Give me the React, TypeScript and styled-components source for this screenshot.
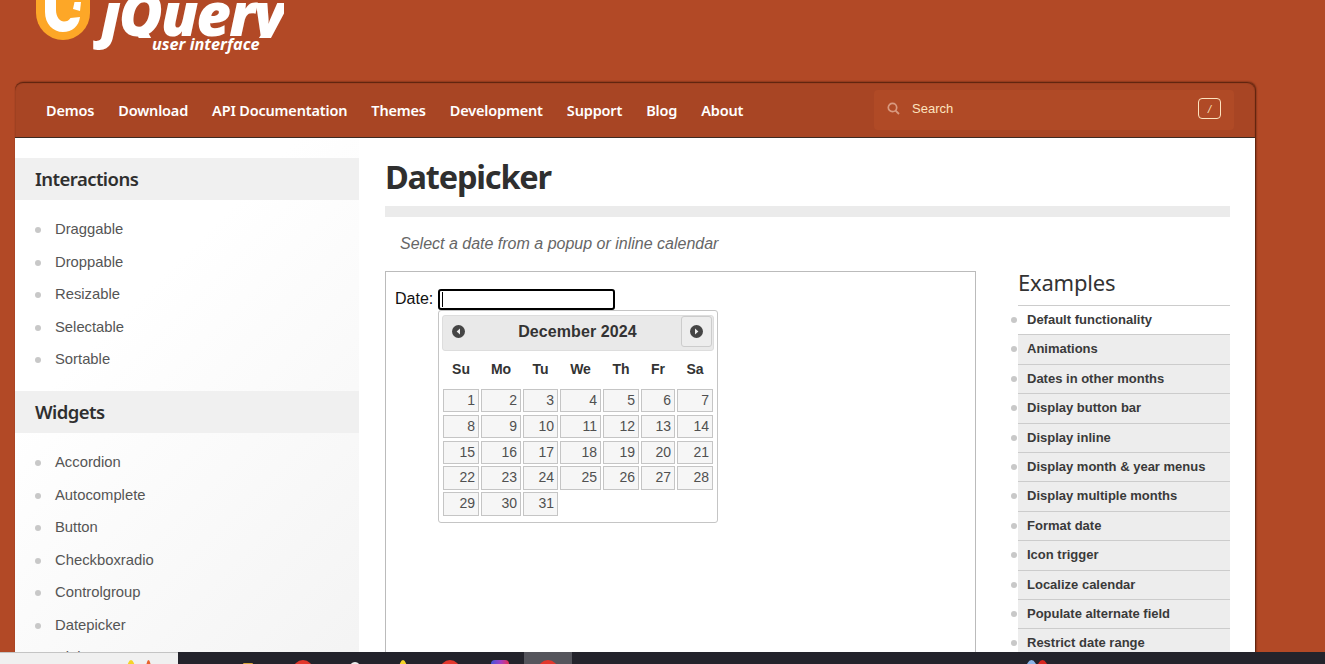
import * as React from 'react';
import styled, { createGlobalStyle } from 'styled-components';

const interactions = ['Draggable', 'Droppable', 'Resizable', 'Selectable', 'Sortable'];
const widgets = ['Accordion', 'Autocomplete', 'Button', 'Checkboxradio', 'Controlgroup', 'Datepicker', 'Dialog'];
const navLinks = ['Demos', 'Download', 'API Documentation', 'Themes', 'Development', 'Support', 'Blog', 'About'];
const examples = [
  'Default functionality',
  'Animations',
  'Dates in other months',
  'Display button bar',
  'Display inline',
  'Display month & year menus',
  'Display multiple months',
  'Format date',
  'Icon trigger',
  'Localize calendar',
  'Populate alternate field',
  'Restrict date range',
];
const weekDays = ['Su', 'Mo', 'Tu', 'We', 'Th', 'Fr', 'Sa'];
const days = Array.from({ length: 31 }, (_, i) => i + 1);

const GlobalStyle = createGlobalStyle`
  html, body {
    margin: 0;
    padding: 0;
    background: #b24926;
  }
`;

const Screen = styled.div`
  width: 1325px;
  height: 664px;
  overflow: hidden;
  display: flex;
  flex-direction: column;
  background: #b24926;
`;

const Page = styled.div`
  height: 652px;
  flex: none;
  overflow: hidden;
`;

const LogoRow = styled.header`
  height: 82px;
  padding-left: 36px;
  display: flex;
  overflow: hidden;
`;

const LogoMark = styled.svg`
  width: 54px;
  height: 40px;
  flex: none;
`;

const LogoType = styled.div`
  margin-left: 11px;
  width: 200px;
  color: #fff;
  font-family: 'Open Sans', sans-serif;
  font-style: italic;
  font-weight: 800;
`;

const LogoWord = styled.div`
  display: flex;
  height: 56px;
  font-size: 60px;
  line-height: 62px;
  margin-top: -18px;
  letter-spacing: -1.9px;
`;

// the tail of the y stays above the "user interface" line, only the j hangs below it
const LogoTail = styled.span`
  display: block;
  height: 56px;
  overflow: hidden;
`;

const LogoSub = styled.div`
  font-size: 16.3px;
  line-height: 12px;
  margin-left: 51px;
  font-weight: 700;
  white-space: nowrap;
`;

const Wrap = styled.div`
  width: 1240px;
  margin-left: 15px;
  box-shadow: 1px 0 2px rgba(60, 20, 5, 0.9);
  border-radius: 8px 8px 0 0;
`;

const NavBar = styled.nav`
  height: 55px;
  background: #a84524;
  border-radius: 8px 8px 0 0;
  border-bottom: 1px solid #3c2a22;
  box-shadow: inset 0 1px 1px rgba(70, 25, 8, 0.8);
  display: flex;
  align-items: center;
  padding-left: 31px;
`;

const NavLink = styled.a`
  color: #fff;
  font-family: 'Noto Sans', sans-serif;
  font-size: 14.5px;
  font-weight: 600;
  margin-right: 24px;
  letter-spacing: -0.17px;
  white-space: nowrap;
`;

const SearchBox = styled.div`
  width: 360px;
  height: 40px;
  margin-left: auto;
  margin-right: 21px;
  box-sizing: border-box;
  padding: 0 13px 2px;
  background: #b04a26;
  border-radius: 4px;
  display: flex;
  align-items: center;
  color: #fde3bf;
  font-family: 'Liberation Sans', sans-serif;
  font-size: 13px;
`;

const SearchIcon = styled.svg`
  width: 13px;
  height: 13px;
  margin-right: 12px;
  flex: none;
`;

const SlashKey = styled.span`
  margin-left: auto;
  width: 23px;
  height: 21px;
  border: 1px solid #fde3bf;
  border-radius: 4px;
  display: flex;
  align-items: center;
  justify-content: center;
  font-size: 11px;
  font-style: italic;
  box-sizing: border-box;
`;

const Body = styled.div`
  background: #fff;
  height: 600px;
  display: flex;
  overflow: hidden;
`;

const Sidebar = styled.aside`
  width: 344px;
  flex: none;
  padding-top: 20px;
  background: linear-gradient(135deg, #ffffff 30%, #f2f2f2 100%);
`;

const SideTitle = styled.h3`
  margin: 0;
  height: 42px;
  line-height: 42px;
  padding-left: 20px;
  background: #f0f0f0;
  color: #2f2f2f;
  font-family: 'Noto Sans', sans-serif;
  font-size: 18.5px;
  font-weight: 600;
  letter-spacing: -0.55px;
`;

const SideList = styled.ul`
  list-style: none;
  margin: 0;
  padding: 13px 0 15.5px;
`;

const SideItem = styled.li`
  height: 32.5px;
  line-height: 32.5px;
  padding-left: 40px;
  color: #555;
  font-family: 'Liberation Sans', sans-serif;
  font-size: 14.8px;
  position: relative;

  &::before {
    content: '';
    position: absolute;
    left: 20px;
    top: 14px;
    width: 6px;
    height: 6px;
    border-radius: 50%;
    background: #c8c8c8;
  }
`;

const Main = styled.main`
  width: 845px;
  margin-left: 26px;
  flex: none;
`;

const PageTitle = styled.h1`
  margin: 0;
  padding-top: 17px;
  height: 51px;
  box-sizing: content-box;
  line-height: 44px;
  color: #2f2f2f;
  font-family: 'Noto Sans', sans-serif;
  font-size: 32.5px;
  font-weight: 700;
  letter-spacing: -1.2px;
  border-bottom: 11px solid #ebebeb;
`;

const Subtitle = styled.p`
  margin: 0;
  height: 54px;
  line-height: 53px;
  padding-left: 15px;
  color: #666;
  font-family: 'Liberation Sans', sans-serif;
  font-size: 16px;
  font-style: italic;
`;

const Columns = styled.div`
  display: flex;
  justify-content: space-between;
`;

const DemoFrame = styled.div`
  width: 591px;
  height: 500px;
  box-sizing: border-box;
  border: 1px solid #bbb;
  padding: 17px 9px;
  position: relative;
  display: flex;
  align-items: flex-start;
  color: #111;
  font-family: 'Liberation Sans', sans-serif;
  font-size: 16px;
  line-height: 20px;
`;

const DateLabel = styled.span`
  margin-right: 5px;
`;

const DateInput = styled.div`
  width: 177px;
  height: 21px;
  box-sizing: border-box;
  border: 2px solid #000;
  border-radius: 3px;
  padding: 1px;
  display: flex;

  &::before {
    content: '';
    width: 1px;
    height: 15px;
    margin-left: 1px;
    background: #000;
  }
`;

const Calendar = styled.div`
  position: absolute;
  left: 52px;
  top: 38px;
  width: 280px;
  height: 213px;
  box-sizing: border-box;
  border: 1px solid #c5c5c5;
  border-radius: 3px;
  background: #fff;
  padding: 4px 3px;
  font-family: 'Liberation Sans', sans-serif;
`;

const CalHeader = styled.div`
  height: 36px;
  box-sizing: border-box;
  background: #e9e9e9;
  border: 1px solid #ddd;
  border-radius: 3px;
  display: flex;
  align-items: flex-start;
  justify-content: space-between;
  padding: 0 1px 0 0;
  color: #333;
  font-size: 16px;
  font-weight: 700;
  letter-spacing: 0.1px;
`;

const CalTitle = styled.span`
  align-self: center;
  margin-bottom: 2px;
`;

const CalButton = styled.span<{ $hover?: boolean }>`
  width: 31px;
  height: 31px;
  box-sizing: border-box;
  display: flex;
  align-items: center;
  justify-content: center;
  border-radius: 3px;
  border: 1px solid ${(p) => (p.$hover ? '#ccc' : 'transparent')};
  background: ${(p) => (p.$hover ? '#ededed' : 'transparent')};
`;

const CalGrid = styled.div`
  display: grid;
  grid-template-columns: 36px 40px 35px 41px 36px 34px 36px;
  column-gap: 2px;
  margin-left: 1px;
`;

const WeekDay = styled.span`
  height: 38px;
  line-height: 36px;
  text-align: center;
  color: #333;
  font-size: 14px;
  font-weight: 700;
`;

const DayGrid = styled(CalGrid)`
  row-gap: 2.4px;
`;

const DayCell = styled.span`
  height: 23.4px;
  box-sizing: border-box;
  border: 1px solid #c5c5c5;
  background: #f6f6f6;
  color: #505050;
  font-size: 14px;
  line-height: 21px;
  text-align: right;
  padding-right: 3px;
`;

const ExamplesCol = styled.section`
  width: 212px;
  flex: none;
`;

const ExamplesTitle = styled.h2`
  margin: 0;
  height: 34px;
  line-height: 22px;
  color: #333;
  font-family: 'Noto Sans', sans-serif;
  font-size: 22px;
  font-weight: 400;
  letter-spacing: -0.2px;
  border-bottom: 1px solid #ccc;
`;

const ExampleList = styled.ul`
  list-style: none;
  margin: 0;
  padding: 0;
`;

const ExampleItem = styled.li<{ $first?: boolean }>`
  height: 29.42px;
  box-sizing: border-box;
  line-height: 28.2px;
  padding-left: 9px;
  background: ${(p) => (p.$first ? '#fff' : '#ededed')};
  border-bottom: 1px solid #ccc;
  color: #3a3a3a;
  font-family: 'Liberation Sans', sans-serif;
  font-size: 13px;
  font-weight: 700;
  white-space: nowrap;
  position: relative;

  &::before {
    content: '';
    position: absolute;
    left: -7px;
    top: 11px;
    width: 6px;
    height: 6px;
    border-radius: 50%;
    background: #c8c8c8;
  }
`;

const Taskbar = styled.footer`
  height: 12px;
  flex: none;
  display: flex;
  overflow: hidden;
  background: #23232b;
`;

const TrayLight = styled.div`
  width: 178px;
  flex: none;
  box-sizing: border-box;
  border-top: 1px solid #c4c4c4;
  background: #f0f0f0;
  display: flex;
  gap: 11px;
  padding-top: 7px;
  padding-left: 127px;
`;

const TrayApps = styled.div`
  display: flex;
  flex: 1;
  padding-left: 46px;
`;

const AppTile = styled.div<{ $active?: boolean; $gap?: number }>`
  width: 48px;
  height: 12px;
  margin-left: ${(p) => p.$gap ?? 0}px;
  display: flex;
  justify-content: center;
  padding-top: 8px;
  box-sizing: border-box;
  background: ${(p) => (p.$active ? '#55555c' : 'transparent')};
`;

const AppDot = styled.span<{ $color: string; $size?: number; $top?: number; $round?: string }>`
  width: ${(p) => p.$size ?? 20}px;
  height: 20px;
  margin-top: ${(p) => p.$top ?? 0}px;
  flex: none;
  border-radius: ${(p) => p.$round ?? '50%'};
  background: ${(p) => p.$color};
`;

const RightTray = styled.div`
  display: flex;
  padding-top: 8px;
  margin-right: 277px;
`;

const NavArrow = ({ dir }: { dir: 'left' | 'right' }) => (
  <svg width="13" height="13" viewBox="0 0 14 14">
    <circle cx="7" cy="7" r="7" fill="#454545" />
    <path d={dir === 'left' ? 'M8.6 3.8 L5 7 L8.6 10.2 Z' : 'M5.4 3.8 L9 7 L5.4 10.2 Z'} fill="#eee" />
  </svg>
);

const App: React.FC = () => {
  return (
    <Screen>
      <GlobalStyle />
      <Page>
        <LogoRow>
          <LogoMark viewBox="0 0 54 40">
            <path d="M0 0 H54 V13 A27 27 0 0 1 0 13 Z" fill="#fda727" />
            <path d="M9 0 H20 V10 C20 17 24 21.5 28 21.5 C31 21.5 33 20.5 34.5 18 L44 17 C43 26 36 32 27 32 C17 32 9 24 9 12 Z" fill="#fff" />
            <path d="M38.5 2 L45 2 L44 11 L37 9 Z" fill="#fff" />
          </LogoMark>
          <LogoType>
            <LogoWord>
              <span>j</span>
              <LogoTail>Query</LogoTail>
            </LogoWord>
            <LogoSub>user interface</LogoSub>
          </LogoType>
        </LogoRow>
        <Wrap>
          <NavBar>
            {navLinks.map((link) => (
              <NavLink key={link}>{link}</NavLink>
            ))}
            <SearchBox>
              <SearchIcon viewBox="0 0 13 13">
                <circle cx="5.5" cy="5.5" r="4.2" fill="none" stroke="#d99a80" strokeWidth="1.7" />
                <path d="M8.6 8.6 L12 12" stroke="#d99a80" strokeWidth="1.8" />
              </SearchIcon>
              Search
              <SlashKey>/</SlashKey>
            </SearchBox>
          </NavBar>
          <Body>
            <Sidebar>
              <SideTitle>Interactions</SideTitle>
              <SideList>
                {interactions.map((item) => (
                  <SideItem key={item}>{item}</SideItem>
                ))}
              </SideList>
              <SideTitle>Widgets</SideTitle>
              <SideList>
                {widgets.map((item) => (
                  <SideItem key={item}>{item}</SideItem>
                ))}
              </SideList>
            </Sidebar>
            <Main>
              <PageTitle>Datepicker</PageTitle>
              <Subtitle>Select a date from a popup or inline calendar</Subtitle>
              <Columns>
                <DemoFrame>
                  <DateLabel>Date:</DateLabel>
                  <DateInput />
                  <Calendar>
                    <CalHeader>
                      <CalButton>
                        <NavArrow dir="left" />
                      </CalButton>
                      <CalTitle>December 2024</CalTitle>
                      <CalButton $hover>
                        <NavArrow dir="right" />
                      </CalButton>
                    </CalHeader>
                    <CalGrid>
                      {weekDays.map((d) => (
                        <WeekDay key={d}>{d}</WeekDay>
                      ))}
                    </CalGrid>
                    <DayGrid>
                      {days.map((d) => (
                        <DayCell key={d}>{d}</DayCell>
                      ))}
                    </DayGrid>
                  </Calendar>
                </DemoFrame>
                <ExamplesCol>
                  <ExamplesTitle>Examples</ExamplesTitle>
                  <ExampleList>
                    {examples.map((item, i) => (
                      <ExampleItem key={item} $first={i === 0}>
                        {item}
                      </ExampleItem>
                    ))}
                  </ExampleList>
                </ExamplesCol>
              </Columns>
            </Main>
          </Body>
        </Wrap>
      </Page>
      <Taskbar>
        <TrayLight>
          <AppDot $color="#f5d327" $size={8} />
          <AppDot $color="#e8632b" $size={5} />
        </TrayLight>
        <TrayApps>
          <AppTile><AppDot $color="#d9a63a" $size={10} $top={3} $round="1px" /></AppTile>
          <AppTile $gap={7}><AppDot $color="#e2372c" /></AppTile>
          <AppTile $gap={4}><AppDot $color="#eeeeee" $size={14} $top={2} /></AppTile>
          <AppTile><AppDot $color="#f5d327" $size={8} /></AppTile>
          <AppTile $gap={-1}><AppDot $color="#e2372c" /></AppTile>
          <AppTile $gap={2}>
            <AppDot $color="linear-gradient(90deg, #3f55d8, #a33ec4 55%, #e8304f)" $size={18} $round="4px" />
          </AppTile>
          <AppTile $active><AppDot $color="#e2372c" /></AppTile>
        </TrayApps>
        <RightTray>
          <AppDot $color="#8ab4e8" $size={11} />
          <AppDot $color="#d8261f" $size={11} />
        </RightTray>
      </Taskbar>
    </Screen>
  );
};

export default App;
